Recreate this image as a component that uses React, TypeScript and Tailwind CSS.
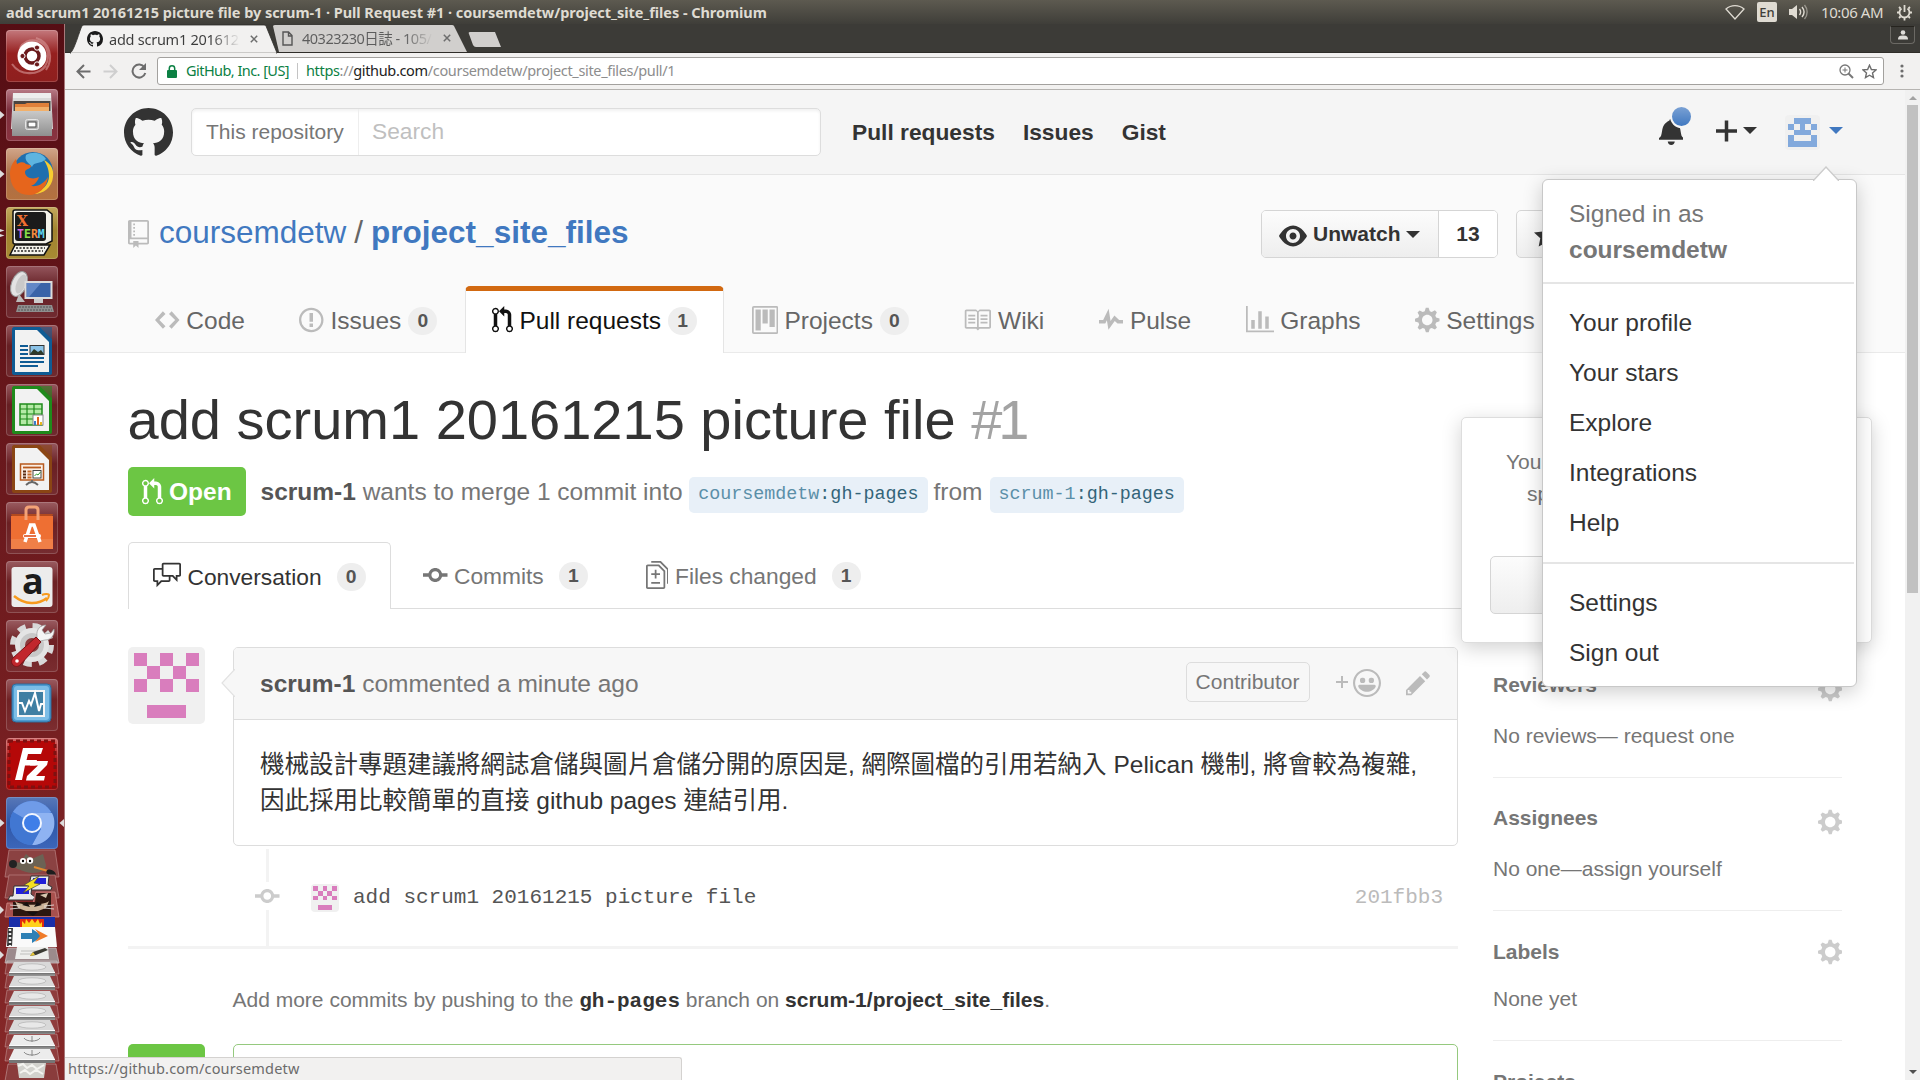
import React from "react";

const sans = "font-['Liberation_Sans','Noto_Sans_CJK_TC',sans-serif]";
const mono = "font-['Liberation_Mono',monospace]";
const ui = "font-['Noto_Sans','Noto_Sans_CJK_JP',sans-serif]";

const ICONS = {
  github: { w: 16, d: "M8 0C3.58 0 0 3.58 0 8c0 3.54 2.29 6.53 5.47 7.59.4.07.55-.17.55-.38 0-.19-.01-.82-.01-1.49-2.01.37-2.53-.49-2.69-.94-.09-.23-.48-.94-.82-1.13-.28-.15-.68-.52-.01-.53.63-.01 1.08.58 1.23.82.72 1.21 1.87.87 2.33.66.07-.52.28-.87.51-1.07-1.78-.2-3.64-.89-3.64-3.95 0-.87.31-1.59.82-2.15-.08-.2-.36-1.02.08-2.12 0 0 .67-.21 2.2.82.64-.18 1.32-.27 2-.27.68 0 1.36.09 2 .27 1.53-1.04 2.2-.82 2.2-.82.44 1.1.16 1.92.08 2.12.51.56.82 1.27.82 2.15 0 3.07-1.87 3.75-3.65 3.95.29.25.54.73.54 1.48 0 1.07-.01 1.93-.01 2.2 0 .21.15.46.55.38A8.013 8.013 0 0 0 16 8c0-4.42-3.58-8-8-8z" },
  repo: { w: 12, d: "M4 9H3V8h1v1zm0-3H3v1h1V6zm0-2H3v1h1V4zm0-2H3v1h1V2zm8-1v12c0 .55-.45 1-1 1H6v2l-1.5-1.5L3 16v-2H1c-.55 0-1-.45-1-1V1c0-.55.45-1 1-1h10c.55 0 1 .45 1 1zm-1 10H1v2h2v-1h3v1h5v-2zm0-10H2v9h9V1z" },
  eye: { w: 16, d: "M8.06 2C3 2 0 8 0 8s3 6 8.06 6C13 14 16 8 16 8s-3-6-7.94-6zM8 12c-2.2 0-4-1.78-4-4 0-2.2 1.8-4 4-4 2.22 0 4 1.8 4 4 0 2.22-1.78 4-4 4zm2-4c0 1.11-.89 2-2 2-1.11 0-2-.89-2-2 0-1.11.89-2 2-2 1.11 0 2 .89 2 2z" },
  star: { w: 14, d: "M14 6l-4.9-.64L7 1 4.9 5.36 0 6l3.6 3.26L2.67 14 7 11.67 11.33 14l-.93-4.74z" },
  code: { w: 14, d: "M9.5 3L8 4.5 11.5 8 8 11.5 9.5 13 14 8 9.5 3zm-5 0L0 8l4.5 5L6 11.5 2.5 8 6 4.5 4.5 3z" },
  issue: { w: 14, d: "M7 2.3c3.14 0 5.7 2.56 5.7 5.7s-2.56 5.7-5.7 5.7A5.71 5.71 0 0 1 1.3 8c0-3.14 2.56-5.7 5.7-5.7zM7 1C3.14 1 0 4.14 0 8s3.14 7 7 7 7-3.14 7-7-3.14-7-7-7zm1 3H6v5h2V4zm0 6H6v2h2v-2z" },
  pull: { w: 12, d: "M11 11.28V5c-.03-.78-.34-1.47-.94-2.06C9.46 2.35 8.78 2.03 8 2H7V0L4 3l3 3V4h1c.27.02.48.11.69.31.21.2.3.42.31.69v6.28A1.993 1.993 0 0 0 10 15a1.993 1.993 0 0 0 1-3.72zm-1 2.92c-.66 0-1.2-.55-1.2-1.2 0-.65.55-1.2 1.2-1.2.65 0 1.2.55 1.2 1.2 0 .65-.55 1.2-1.2 1.2zM4 3c0-1.11-.89-2-2-2a1.993 1.993 0 0 0-1 3.72v6.56A1.993 1.993 0 0 0 2 15a1.993 1.993 0 0 0 1-3.72V4.72c.59-.34 1-.98 1-1.72zm-.8 10c0 .66-.55 1.2-1.2 1.2-.65 0-1.2-.55-1.2-1.2 0-.65.55-1.2 1.2-1.2.65 0 1.2.55 1.2 1.2zM2 4.2C1.34 4.2.8 3.65.8 3c0-.65.55-1.2 1.2-1.2.65 0 1.2.55 1.2 1.2 0 .65-.55 1.2-1.2 1.2z" },
  project: { w: 15, d: "M10 12h3V2h-3v10zm-4-2h3V2H6v8zm-4 4h3V2H2v12zm-1 1h13V1H1v14zM14 0H1a1 1 0 0 0-1 1v14a1 1 0 0 0 1 1h13a1 1 0 0 0 1-1V1a1 1 0 0 0-1-1z" },
  book: { w: 16, d: "M3 5h4v1H3V5zm0 3h4V7H3v1zm0 2h4V9H3v1zm11-5h-4v1h4V5zm0 2h-4v1h4V7zm0 2h-4v1h4V9zm2-6v9c0 .55-.45 1-1 1H9.5l-1 1-1-1H2c-.55 0-1-.45-1-1V3c0-.55.45-1 1-1h5.5l1 1 1-1H15c.55 0 1 .45 1 1zm-8 .5L7.5 3H2v9h6V3.5zm7-.5H9.5l-.5.5V12h6V3z" },
  pulse: { w: 14, d: "M11.5 8L8.8 5.4 6.6 8.5 5.5 1.6 2.38 8H0v2h3.6l.9-1.8.9 5.4L9 8.5l1.6 1.5H14V8z" },
  graph: { w: 16, d: "M16 14v1H0V0h1v14h15zM5 13H3V8h2v5zm4 0H7V3h2v10zm4 0h-2V6h2v7z" },
  gear: { w: 14, d: "M14 8.77v-1.6l-1.94-.64-.45-1.09.88-1.84-1.13-1.13-1.81.91-1.09-.45-.69-1.92h-1.6l-.63 1.94-1.11.45-1.84-.88-1.13 1.13.91 1.81-.45 1.09L0 7.23v1.59l1.94.64.45 1.09-.88 1.84 1.13 1.13 1.81-.91 1.09.45.69 1.92h1.59l.63-1.94 1.11-.45 1.84.88 1.13-1.13-.92-1.81.47-1.09L14 8.75v.02zM7 11c-1.66 0-3-1.34-3-3s1.34-3 3-3 3 1.34 3 3-1.34 3-3 3z" },
  discussion: { w: 16, d: "M15 1H6c-.55 0-1 .45-1 1v2H1c-.55 0-1 .45-1 1v6c0 .55.45 1 1 1h1v3l3-3h4c.55 0 1-.45 1-1V9h1l3 3V9h1c.55 0 1-.45 1-1V2c0-.55-.45-1-1-1zM9 11H4.5L3 12.5V11H1V5h4v3c0 .55.45 1 1 1h3v2zm6-3h-2v1.5L11.5 8H6V2h9v6z" },
  commit: { w: 14, d: "M10.86 7c-.45-1.72-2-3-3.86-3-1.86 0-3.41 1.28-3.86 3H0v2h3.14c.45 1.72 2 3 3.86 3 1.86 0 3.41-1.28 3.86-3H14V7h-3.14zM7 10.2c-1.22 0-2.2-.98-2.2-2.2 0-1.22.98-2.2 2.2-2.2 1.22 0 2.2.98 2.2 2.2 0 1.22-.98 2.2-2.2 2.2z" },
  diff: { w: 13, d: "M6 7h2v1H6v2H5V8H3V7h2V5h1v2zm-3 6h5v-1H3v1zM7.5 2L11 5.5V15c0 .55-.45 1-1 1H1c-.55 0-1-.45-1-1V3c0-.55.45-1 1-1h6.5zM10 6L7 3H1v12h9V6zM8.5 0H3v1h5l4 4v8h1V4.5L8.5 0z" },
  bell: { w: 14, d: "M14 12v1H0v-1l.73-.58c.77-.77.81-2.55 1.19-4.42C2.69 3.23 6 2 6 2c0-.55.45-1 1-1s1 .45 1 1c0 0 3.39 1.23 4.16 5 .38 1.88.42 3.66 1.19 4.42l.66.58H14zm-7 4c1.11 0 2-.89 2-2H5c0 1.11.89 2 2 2z" },
  plus: { w: 12, d: "M12 9H7v5H5V9H0V7h5V2h2v5h5z" },
  smiley: { w: 16, d: "M8 0C3.58 0 0 3.58 0 8s3.58 8 8 8 8-3.58 8-8-3.58-8-8-8zm4.81 12.81a6.72 6.72 0 0 1-2.17 1.45c-.83.36-1.72.53-2.64.53-.92 0-1.81-.17-2.64-.53-.81-.34-1.55-.83-2.17-1.45a6.773 6.773 0 0 1-1.45-2.17A6.59 6.59 0 0 1 1.21 8c0-.92.17-1.81.53-2.64.34-.81.83-1.55 1.45-2.17.62-.62 1.36-1.11 2.17-1.45A6.59 6.59 0 0 1 8 1.21c.92 0 1.81.17 2.64.53.81.34 1.55.83 2.17 1.45.62.62 1.11 1.36 1.45 2.17.36.83.53 1.72.53 2.64 0 .92-.17 1.81-.53 2.64-.34.81-.83 1.55-1.45 2.17zM4 6.8v-.59c0-.66.53-1.19 1.2-1.19h.59c.66 0 1.19.53 1.19 1.19v.59c0 .67-.53 1.2-1.19 1.2H5.2C4.53 8 4 7.47 4 6.8zm5 0v-.59c0-.66.53-1.19 1.2-1.19h.59c.66 0 1.19.53 1.19 1.19v.59c0 .67-.53 1.2-1.19 1.2h-.59C9.53 8 9 7.47 9 6.8zm4 3.2c-.72 1.88-2.91 3-5 3s-4.28-1.13-5-3c-.14-.39.23-1 .66-1h8.59c.41 0 .89.61.75 1z" },
  pencil: { w: 14, d: "M0 12v3h3l8-8-3-3-8 8zm3 2H1v-2h1v1h1v1zm10.3-9.3L12 6 9 3l1.3-1.3a.996.996 0 0 1 1.41 0l1.59 1.59c.39.39.39 1.02 0 1.41z" },
};

function Octicon({ name, size = 28, className = "" }: { name: keyof typeof ICONS; size?: number; className?: string }) {
  const { w, d } = ICONS[name];
  return (
    <svg className={`shrink-0 fill-current ${className}`} viewBox={`0 0 ${w} 16`} width={(w * size) / 16} height={size}>
      <path fillRule="evenodd" d={d} />
    </svg>
  );
}

function Identicon({ rows, color, className }: { rows: string[]; color: string; className: string }) {
  return (
    <svg viewBox="0 0 420 420" className={`shrink-0 ${className}`} shapeRendering="crispEdges">
      <rect width="420" height="420" fill="#f0f0f0" />
      {rows.flatMap((r, y) =>
        r.split("").map((c, x) =>
          c === "x" ? <rect key={`${x}${y}`} x={35 + x * 70} y={35 + y * 70} width="70" height="70" fill={color} /> : null
        )
      )}
    </svg>
  );
}

const PINK = ["x.x.x", ".x.x.", "x.x.x", ".....", ".xxx."];
const BLUE = [".xxx.", "x.x.x", ".xxx.", "x...x", "xxxxx"];

function Caret({ className = "" }: { className?: string }) {
  return <span className={`h-0 w-0 shrink-0 border-x-[7px] border-t-[7px] border-x-transparent ${className}`} />;
}

function Counter({ children }: { children: React.ReactNode }) {
  return (
    <span className="flex h-[28px] min-w-[29px] items-center justify-center rounded-full bg-[#eee] text-[19.25px] leading-[28px] font-bold text-[#555]">
      {children}
    </span>
  );
}

/* ---------- desktop launcher ---------- */

const LAUNCHER: { bg: string; mark?: string; art: React.ReactNode }[] = [
  {
    bg: "bg-[linear-gradient(#c4797d,#96201f_45%,#8e1f1e)]",
    art: (
      <g fill="none">
        <path d="M14 18C20 6 40 8 42 24c1 12-8 20-20 19M6 34c8 12 26 12 34 2M30 8c14 4 18 20 10 32" stroke="#d99a9a" strokeOpacity=".6" strokeWidth="2" />
        <circle cx="26" cy="26" r="14.500" fill="#fff" />
        <circle cx="26" cy="26" r="7" stroke="#6b1a1c" strokeWidth="3.500" />
        <g fill="#6b1a1c" stroke="#fff" strokeWidth="1">
          <circle cx="16.500" cy="26" r="2.600" />
          <circle cx="31" cy="17.600" r="2.600" />
          <circle cx="31" cy="34.400" r="2.600" />
        </g>
      </g>
    ),
  },
  {
    bg: "bg-[linear-gradient(#b87a86,#7d2f3d_40%,#8a3340)]",
    mark: "one",
    art: (
      <g>
        <defs>
          <linearGradient id="cabinet" x1="0" y1="0" x2="0" y2="1">
            <stop offset="0" stopColor="#c9c9c9" />
            <stop offset="1" stopColor="#8f8f8f" />
          </linearGradient>
        </defs>
        <path d="M7 4h38l2 36H5z" fill="#d9d9d9" />
        <path d="M7 4h38v5H7z" fill="#ededed" />
        <rect x="7.500" y="12" width="37" height="11" fill="#4a4440" />
        <path d="M9 15h10l2-1h22v8H9z" fill="#e0803a" />
        <path d="M9 18h34v4H9z" fill="#f2b06a" />
        <path d="M6 22h40v25H6z" fill="url(#cabinet)" />
        <rect x="19.500" y="30.500" width="13" height="10" rx="2" fill="#b5b5b5" stroke="#e6e6e6" />
        <rect x="22" y="33" width="8" height="5" fill="#fff" stroke="#444" />
      </g>
    ),
  },
  {
    bg: "bg-[linear-gradient(#d1a68a,#ad6f47_50%,#b4713f)]",
    mark: "one",
    art: (
      <g>
        <circle cx="27" cy="24" r="20" fill="#1f6fae" />
        <path d="M20 7c6-4 16-3 20 4-6 6-12 2-14 8-3-4-8-6-6-12z" fill="#5db4e0" />
        <path d="M38 12c7 4 10 9 9 17-1 11-11 18-21 17 11-3 17-10 17-18 0-8-3-12-5-16z" fill="#f8cd30" />
        <path d="M4 26c0-7 3-12 6-15l1 5c3-2 6-2 8-1 0 2 6 1 6 3 0 3-6 3-6 6 0 6 8 8 14 5-2 7-8 9-8 9 8 1 13-3 17-9-1 11-10 18-19 18C11 47 4 38 4 26z" fill="#e6651c" />
      </g>
    ),
  },
  {
    bg: "bg-[linear-gradient(#c4a95e,#a1832f_45%,#a88a33)]",
    mark: "two",
    art: (
      <g>
        <path d="M9 3h32l5 4v27l-6 3H9c-2 0-2-1-2-2V5c0-2 1-2 2-2z" fill="#f4f2ea" stroke="#111" strokeWidth="1.500" />
        <rect x="9" y="5" width="31" height="29" rx="3" fill="#1b1b1b" />
        <path d="M9 38h35l-6 10H4z" fill="#f4f2ea" stroke="#111" strokeWidth="1.500" />
        <path d="M10 41h29M8 44h29" stroke="#222" strokeDasharray="2 1.500" strokeWidth="1.500" />
        <text x="11" y="19" fontSize="14" fontWeight="bold" fill="#f07030" fontFamily="DejaVu Serif">X</text>
        <text x="11" y="30.500" fontSize="11.500" fontWeight="bold" fontFamily="DejaVu Sans Mono">
          <tspan fill="#d96ad9">T</tspan><tspan fill="#8ae04a">E</tspan><tspan fill="#f08a40">R</tspan><tspan fill="#5fd7f0">M</tspan>
        </text>
      </g>
    ),
  },
  {
    bg: "bg-[linear-gradient(#94565d,#662126_40%,#702a30)]",
    art: (
      <g>
        <ellipse cx="13" cy="18" rx="7.500" ry="13" transform="rotate(22 13 18)" fill="#e3e3e3" stroke="#9a9a9a" />
        <ellipse cx="15" cy="18" rx="4.500" ry="10" transform="rotate(22 15 18)" fill="#c9c9c9" />
        <path d="M13 28l6 8h-9z" fill="#bbb" />
        <rect x="18.500" y="15" width="28" height="18" fill="#dcdcdc" />
        <rect x="20.500" y="17" width="24" height="14" fill="#3a63a8" />
        <path d="M21 17h14l-12 14h-2z" fill="#6287c6" />
        <rect x="28" y="33" width="9" height="4" fill="#ccc" />
        <path d="M12 39h34l2 7H10z" fill="#8f8f8f" />
        <path d="M13 41h32M12 44h34" stroke="#555" strokeDasharray="2 1" />
      </g>
    ),
  },
  { bg: "bg-[linear-gradient(#96585e,#661f23_40%,#702a2f)]", art: <OfficeDoc color="#0f5b94" kind="writer" /> },
  { bg: "bg-[linear-gradient(#96585e,#661f23_40%,#702a2f)]", art: <OfficeDoc color="#1f8a1b" kind="calc" /> },
  { bg: "bg-[linear-gradient(#96585e,#691f23_40%,#752c30)]", art: <OfficeDoc color="#8a4514" kind="impress" /> },
  {
    bg: "bg-[linear-gradient(#9a5c61,#6b2023_40%,#762c30)]",
    art: (
      <g>
        <path d="M5 12h42l-2 5H7z" fill="#b34a1e" />
        <path d="M5 14h42v33H5z" fill="#ee6f33" />
        <path d="M5 37h42v10H5z" fill="#f07f47" />
        <path d="M20 18V8c0-2 1-3 3-3h6c2 0 3 1 3 3v10" fill="none" stroke="#f4a277" strokeWidth="3" />
        <path d="M19 40l5.500-17h3.500L34 40" fill="none" stroke="#fff" strokeWidth="3.500" />
        <rect x="17" y="32" width="18" height="4" rx="2" fill="#fff" />
        <rect x="18" y="33.200" width="12" height="1.600" fill="#e0501c" />
      </g>
    ),
  },
  {
    bg: "bg-[linear-gradient(#9a5c61,#6c2023_40%,#772c2f)]",
    art: (
      <g>
        <rect x="5.500" y="6" width="41" height="40" rx="3" fill="#ececec" />
        <text x="16" y="33" fontSize="36" fontWeight="bold" fill="#1c1c1c" fontFamily="Open Sans">a</text>
        <path d="M8 35c11 9 24 9 33 2" fill="none" stroke="#f79a1e" strokeWidth="2.500" />
        <path d="M36 34c3-1.500 7-1 7 0s-1 4-3 6" fill="none" stroke="#f79a1e" strokeWidth="2" />
      </g>
    ),
  },
  {
    bg: "bg-[linear-gradient(#9a5c61,#6e2124_40%,#7a2d30)]",
    art: (
      <g>
        <circle cx="26" cy="25" r="19" fill="none" stroke="#d8d8d8" strokeWidth="6" strokeDasharray="8 6.920" />
        <circle cx="26" cy="25" r="17" fill="#e4e4e4" />
        <circle cx="26" cy="25" r="12" fill="#c8c8c8" />
        <circle cx="26" cy="25" r="7" fill="#8a3a3c" />
        <path d="M31 16c-1-6 3-11 9-11l-4 5 3 4 6-1 3-4c1 6-3 11-9 11l-5 1-3-3z" fill="#f4f4f4" stroke="#999" strokeWidth=".7" />
        <path d="M30 17l5 5-21 23c-2 2-5 2-7 0s-2-5 0-7z" fill="#c1272d" stroke="#7c1216" />
        <circle cx="11" cy="41" r="1.800" fill="#fff" />
      </g>
    ),
  },
  {
    bg: "bg-[linear-gradient(#9a5c61,#702124_40%,#7c2d30)]",
    art: (
      <g>
        <rect x="6" y="5" width="39" height="38" rx="4" fill="#4d9bd0" stroke="#2f6c9c" />
        <rect x="8" y="7" width="35" height="34" rx="3" fill="#7cbde6" />
        <rect x="12" y="12" width="26" height="25" fill="#3f7fa3" stroke="#f5f5f5" strokeWidth="2" />
        <path d="M13 24h3l3 8 4-10 2 4 4-12 4 18 2-7h2" fill="none" stroke="#fff" strokeWidth="2" />
      </g>
    ),
  },
  {
    bg: "bg-[linear-gradient(#d06a6a,#b00d0d_45%,#a40606)]",
    art: (
      <g>
        <rect x="3" y="3" width="46" height="46" fill="#b50808" stroke="#7e1111" strokeWidth="3" strokeDasharray="4 3" />
        <path d="M17 10h20l-2 6H22l-1.500 6H31l-1.500 5.500H19L16 42h-7z" fill="#fff" />
        <path d="M25 23h17l-1 4-11 11h9l-1 4.500H20l1-4.500 11-10.500h-8z" fill="#fff" />
      </g>
    ),
  },
  {
    bg: "bg-[linear-gradient(#5878b8,#2f57a8_50%,#3c66ba)]",
    mark: "both",
    art: (
      <g>
        <circle cx="26" cy="26" r="22" fill="#4a80dc" />
        <path d="M26 26L7 15A22 22 0 0 1 45 15z" fill="#6f9be8" />
        <path d="M26 16h20a22 22 0 0 1-20 32l9-17z" fill="#8fb3f2" />
        <path d="M26 26L7 15a22 22 0 0 0 19 33l9-16z" fill="#4177d2" />
        <circle cx="26" cy="26" r="10" fill="#f2f6fe" />
        <circle cx="26" cy="26" r="8" fill="#3f7ee8" />
      </g>
    ),
  },
];

function OfficeDoc({ color, kind }: { color: string; kind: "writer" | "calc" | "impress" }) {
  return (
    <g>
      <path d="M8 2h26l12 12v34c0 1-1 2-2 2H8c-1 0-2-1-2-2V4c0-1 1-2 2-2z" fill={color} />
      <path d="M34 2h12v12z" fill={color} opacity=".55" />
      <path d="M9 5h22l12 12v30H9z" fill="#f2f2f2" />
      {kind === "writer" && (
        <g>
          <path d="M14 21h8M14 25h8M14 29h8M14 33h24M14 37h24M14 41h18" stroke="#0f5b94" strokeWidth="2" />
          <rect x="24" y="20.500" width="14" height="9" fill="#8cc3e8" stroke="#333" />
          <path d="M24 29l4-5 4 3 3-2 3 4z" fill="#2d3a2a" />
        </g>
      )}
      {kind === "calc" && (
        <g>
          <rect x="14" y="20" width="22" height="21" fill="#b5eaa6" stroke="#1f8a1b" strokeWidth="1.500" />
          <path d="M14 25h22M14 30h22M14 35h22M21 20v21M28 20v21" stroke="#1f8a1b" strokeWidth="1.200" />
          <rect x="27" y="31" width="10" height="10" fill="#fff" stroke="#888" />
          <path d="M29 41v-4" stroke="#3a7bc8" strokeWidth="2" />
          <path d="M32 41v-8" stroke="#e0641c" strokeWidth="2" />
          <path d="M35 41v-3" stroke="#e8b820" strokeWidth="2" />
        </g>
      )}
      {kind === "impress" && (
        <g>
          <rect x="14.500" y="21" width="23" height="16" fill="#fbeee4" stroke="#b85a1e" strokeWidth="1.500" />
          <path d="M17 24.500h18" stroke="#b85a1e" strokeWidth="1.800" />
          <path d="M17 28.500h3M17 31.500h3M17 34.500h3" stroke="#5a2a10" strokeWidth="2" />
          <path d="M21.500 28.500h4M21.500 31.500h4M21.500 34.500h4" stroke="#c96a28" strokeWidth="2" />
          <rect x="27" y="27.500" width="8" height="7.500" fill="#fff" stroke="#444" />
          <path d="M28.500 33l2-2 1.500 1 2.500-3" stroke="#2a9a2a" fill="none" />
          <path d="M26 37v2M20 42c4-4 8-4 12 0" stroke="#666" strokeWidth="1.800" fill="none" />
        </g>
      )}
    </g>
  );
}

function Drive({ y, usb = false }: { y: number; usb?: boolean }) {
  return (
    <g transform={`translate(0 ${y})`}>
      <path d="M7-6h50l2 13H5z" fill="#fff" fillOpacity=".1" stroke="#fff" strokeOpacity=".35" strokeWidth=".8" />
      <path d="M14-5h36l5 10.500H9z" fill={usb ? "#ececec" : "#d9d9d9"} />
      {usb ? (
        <path d="M32-4v6M24-2c2 4 14 4 16 0" stroke="#888" fill="none" />
      ) : (
        <ellipse cx="32" cy="0" rx="14" ry="3.200" fill="#e8e8e8" stroke="#aaa" strokeWidth=".6" />
      )}
      <path d="M9 5.500h46v3.500H9z" fill="#767676" />
      <path d="M9 5h46v1H9z" fill="#fafafa" />
    </g>
  );
}

function FoldedIcons() {
  return (
    <svg width="64" height="231" viewBox="0 849 64 231" className="block">
      <path d="M9 850h46l4 27H5z" fill="#8b4242" stroke="#b57a7a" strokeWidth=".8" />
      <path d="M10 860c8 6 20 0 33-6l3 11c0 8-12 9-20 7-8-3-14-4-16-12z" fill="#6b6254" />
      <path d="M22 860l4-6 5 4z" fill="#6b6254" />
      <circle cx="13" cy="864" r="4" fill="#222" />
      <circle cx="23" cy="861" r="3" fill="#fff" />
      <circle cx="30" cy="860.500" r="3.200" fill="#fff" />
      <circle cx="23" cy="861" r="1.200" />
      <circle cx="30" cy="861" r="1.200" />
      <path d="M34 867l14 4" stroke="#e08a30" strokeWidth="2" />
      <ellipse cx="51" cy="873" rx="5" ry="3" transform="rotate(25 51 873)" fill="#1d1d1d" />
      <path d="M9 875h46l4 23H5z" fill="#8b4242" stroke="#b57a7a" strokeWidth=".8" />
      <path d="M31 876h18l-1 9 4 2-1 3H28z" fill="#e8e8e8" stroke="#333" />
      <rect x="33" y="878" width="13" height="6" fill="#2020d8" />
      <path d="M14 886h18l-1 8 4 3-2 3H8l2-4h3z" fill="#e8e8e8" stroke="#333" />
      <rect x="16" y="888" width="13" height="6" fill="#2020d8" />
      <path d="M39 876l-15 9 5 1-6 7 17-9-6-1z" fill="#f5e020" stroke="#444" strokeWidth=".7" />
      <path d="M36 892h19l4 25H5l2-14h26z" fill="#a8504d" stroke="#d08a88" strokeWidth=".8" />
      <path d="M36 893h15v23H13v-14h22z" fill="#2c1710" />
      <path d="M15 901c5 5 28 5 34 0l-3 7-8 3h-12l-8-3z" fill="#cdb59a" />
      <path d="M40 895l8-2-2 5z" fill="#d8c8b0" />
      <path d="M22 905l8 2-3-5zM42 905l-8 2 3-5zM27 912h11l-5 4z" fill="#151010" />
      <path d="M10 905l10 1M10 909l10-1M54 905l-10 1M54 909l-10-1" stroke="#eee" strokeWidth=".8" />
      <rect x="9" y="917" width="46" height="11" fill="#1a2ea8" />
      <path d="M20 928v-9h24v9z" fill="#e2290f" />
      <path d="M22 928v-7l3 3 1-5 3 4 3-4 3 4 3-4 2 5 2-2v6z" fill="#ffd11a" />
      <path d="M8 927h47l2 20H6z" fill="#fafafa" />
      <path d="M8 928h5l-1 18H7z" fill="#333" />
      <path d="M10 929v17" stroke="#eee" strokeDasharray="2 2" strokeWidth="2.500" />
      <path d="M21 933h11v-4l11 7-11 7v-4H21z" fill="#2e80b5" />
      <path d="M35 929l13 7-13 6 5-6z" fill="#ef7a28" />
      <path d="M8 948h48l3 15H5z" fill="#9c8a8c" stroke="#c8b8ba" strokeWidth=".8" />
      <path d="M17 947h31l1 12H15z" fill="#eeeeec" />
      <path d="M21 951h20M20 954h14" stroke="#aaa" strokeWidth=".7" />
      <path d="M30 956l3-4 12-4 3 2-12 5z" fill="#3b3a33" />
      <path d="M30 956l3-4 2 3z" fill="#e8c838" />
      <Drive y={967} />
      <Drive y={981} />
      <Drive y={996} />
      <Drive y={1011} />
      <Drive y={1025} />
      <Drive y={1040} usb />
      <Drive y={1054} usb />
      <path d="M8 1064h48l3 17H5z" fill="#8a3c3c" stroke="#fff" strokeOpacity=".4" strokeWidth=".8" />
      <path d="M17 1063h29l-2 15H19z" fill="#d2d2cd" />
      <path d="M18 1066l5-2 4 4 5-3 5 4 7-4M20 1073l5-3 5 4 6-4 7 4" stroke="#f4f4f0" strokeWidth="2" fill="none" />
      <path d="M0 906l4 4-4 4zM0 951l4 4-4 4z" fill="#ddd" />
    </svg>
  );
}

function Launcher() {
  return (
    <div className="flex w-[65px] shrink-0 flex-col border-r border-[#a8787a] bg-[linear-gradient(#560e14,#6b191d_45%,#862828)]">
      <div className="flex flex-col gap-[7px] pt-[6px]">
        {LAUNCHER.map((t, i) => (
          <div key={i} className="flex h-[52px] items-center">
            <svg width="6" height="12" viewBox="0 0 6 12" className="shrink-0">
              {(t.mark === "one" || t.mark === "both") && <path d="M0 2l4.500 4L0 10z" fill="#ddd" />}
              {t.mark === "two" && <path d="M0 2l4.500 1.500L0 5zM0 7l4.500 1.500L0 10z" fill="#ddd" />}
            </svg>
            <div className={`h-[52px] w-[52px] rounded-[4px] shadow-[inset_0_0_0_1px_rgba(255,255,255,0.18)] ${t.bg}`}>
              <svg width="52" height="52" viewBox="0 0 52 52" className="overflow-visible">{t.art}</svg>
            </div>
            <svg width="6" height="12" viewBox="0 0 6 12" className="shrink-0">
              {t.mark === "both" && <path d="M6 2L1.500 6 6 10z" fill="#ddd" />}
            </svg>
          </div>
        ))}
      </div>
      <FoldedIcons />
    </div>
  );
}

/* ---------- desktop bar and browser chrome ---------- */

function TopBar() {
  return (
    <div className={`flex h-[24px] shrink-0 items-center justify-between bg-[linear-gradient(#5d5a50,#3f3e39)] pr-[7px] pl-[6px] text-[#dfdbd2] ${ui}`}>
      <span className="text-[14.500px] leading-[24px] font-bold whitespace-nowrap tracking-[-0.05px]">
        add scrum1 20161215 picture file by scrum-1 · Pull Request #1 · coursemdetw/project_site_files - Chromium
      </span>
      <div className="flex items-center">
        <svg width="20" height="16" viewBox="0 0 20 16" fill="none" stroke="#dfdbd2" strokeWidth="1.300">
          <path d="M1 5c5-4.500 13-4.500 18 0l-9 10z" />
        </svg>
        <span className="ml-[12px] flex h-[20px] w-[20px] items-center justify-center rounded-[2px] bg-[#dfdbd2] text-[13px] leading-[20px] font-medium text-[#3f3e39]">En</span>
        <svg className="ml-[12px]" width="19" height="18" viewBox="0 0 19 18" fill="none" stroke="#dfdbd2" strokeWidth="1.400">
          <path d="M0 6h3l5-4v14l-5-4H0z" fill="#dfdbd2" stroke="none" />
          <path d="M10.500 6c1.500 2 1.500 4 0 6M13 4c2.500 3 2.500 7 0 10" />
          <path d="M15.500 2c3.500 4 3.500 10 0 14" opacity=".5" />
        </svg>
        <span className="ml-[13px] w-[61px] text-[15px] leading-[24px] whitespace-nowrap tracking-[-0.4px]">10:06 AM</span>
        <svg className="ml-[14px]" width="17" height="17" viewBox="0 0 17 17" fill="none" stroke="#dfdbd2">
          <path d="M5.500 4.500a5 5 0 1 0 6 0" strokeWidth="1.800" />
          <path d="M8.500 1v7" strokeWidth="1.800" />
          <path d="M1 8.500h2M14 8.500h2M3 3l1.500 1.500M14 3l-1.500 1.500M3 14l1.500-1.500M14 14l-1.500-1.500M8.500 14v2.500" strokeWidth="1.800" />
        </svg>
      </div>
    </div>
  );
}

function TabClose({ className = "" }: { className?: string }) {
  return (
    <svg className={`shrink-0 ${className}`} width="8" height="8" viewBox="0 0 8 8" stroke="#6d6d6d" strokeWidth="1.500">
      <path d="M.8.8l6.400 6.400M7.200.8L.8 7.200" />
    </svg>
  );
}

function TabStrip() {
  return (
    <div className={`flex h-[29px] shrink-0 border-b border-[#2f2d29] bg-[#3c3b37] text-[14.500px] leading-[28px] ${ui}`}>
      <div className="relative z-10 -mb-px ml-[5px] h-[29px] w-[208px]">
        <svg className="absolute inset-0 overflow-visible" width="208" height="29" viewBox="0 0 208 29">
          <path d="M0 29C4 28 10 5 12 2q.6-1 2-1h180q1.500 0 2 1l11 27z" fill="#f2f1f0" stroke="#2f2d29" strokeWidth=".8" />
          <path d="M1 28.500h205V30H1z" fill="#f2f1f0" />
        </svg>
        <div className="relative flex h-[29px] items-center pl-[17px]">
          <Octicon name="github" size={16} className="text-[#1b1b1b]" />
          <span className="ml-[6px] w-[131px] overflow-hidden bg-[linear-gradient(90deg,#3c3c3c_78%,#3c3c3c00)] bg-clip-text whitespace-nowrap tracking-[-0.25px] text-transparent">add scrum1 201612</span>
          <TabClose className="ml-[10px]" />
        </div>
      </div>
      <div className="relative h-[28px] w-[194px]">
        <svg className="absolute inset-0 overflow-visible" width="194" height="28" viewBox="0 0 194 28">
          <path d="M-5 2q.6-1 2-1h177q1.500 0 2 1l13 26H1z" fill="#d1cfcd" />
        </svg>
        <div className="relative flex h-[28px] items-center pl-[4px] text-[#5c5c5c]">
          <svg width="11" height="15" viewBox="0 0 11 15" fill="none" stroke="#555" strokeWidth="1.400">
            <path d="M1 1h5.500L10 4.500V14H1zM6.500 1v4H10" />
          </svg>
          <span className="ml-[9px] w-[131px] overflow-hidden bg-[linear-gradient(90deg,#5c5c5c_78%,#5c5c5c00)] bg-clip-text whitespace-nowrap tracking-[-0.5px] text-transparent">40323230日誌 - 105/</span>
          <TabClose className="ml-[10px]" />
        </div>
      </div>
      <svg className="mt-[8px] -ml-[4px]" width="34" height="16" viewBox="0 0 34 16">
        <path d="M2 0h25l6 15H8Q6 15 5 13L1 2Q0 0 2 0z" fill="#d1cfcd" />
      </svg>
      <div className="mt-[2px] mr-[5px] ml-auto flex h-[18px] w-[25px] items-center justify-center rounded-b-[4px] border border-[#6b6964] border-t-[#26241f]">
        <svg width="10" height="10" viewBox="0 0 10 10" fill="#dedcd8">
          <circle cx="5" cy="2.500" r="2.300" />
          <path d="M0 9.500C0 6 2 5.500 5 5.500s5 .5 5 4z" />
        </svg>
      </div>
    </div>
  );
}

function Toolbar() {
  return (
    <div className={`flex h-[37px] shrink-0 items-center border-b border-[#b6b4b1] bg-[#f2f1f0] text-[14.500px] ${ui}`}>
      <svg className="ml-[11px]" width="15" height="15" viewBox="0 0 15 15" fill="none" stroke="#6d6d6d" strokeWidth="2">
        <path d="M14.500 7.500H2M8 1L1.500 7.500 8 14" />
      </svg>
      <svg className="ml-[12px]" width="15" height="15" viewBox="0 0 15 15" fill="none" stroke="#cfcfcf" strokeWidth="2">
        <path d="M.5 7.500H13M7 1l6.500 6.500L7 14" />
      </svg>
      <svg className="ml-[13px]" width="16" height="16" viewBox="0 0 16 16" fill="none" stroke="#6d6d6d" strokeWidth="2">
        <path d="M13.500 4.500A6.500 6.500 0 1 0 14.300 10" />
        <path d="M15 0v7H8z" fill="#6d6d6d" stroke="none" />
      </svg>
      <div className="ml-[10px] flex h-[28px] w-[1727px] items-center rounded-[3px] border border-[#a3a19e] bg-white pr-[6px] pl-[9px]">
        <svg width="10" height="13" viewBox="0 0 10 13">
          <rect x="0" y="5" width="10" height="8" rx="1" fill="#0b8043" />
          <path d="M2.300 6V3.500a2.700 2.700 0 0 1 5.400 0V6" fill="none" stroke="#0b8043" strokeWidth="1.500" />
        </svg>
        <span className="ml-[9px] w-[103px] whitespace-nowrap tracking-[-0.55px] text-[#0b8043]">GitHub, Inc. [US]</span>
        <span className="ml-[8px] h-[16px] w-px bg-[#c4c4c4]" />
        <span className="ml-[8px] whitespace-nowrap tracking-[-0.34px] text-[#8d8d8d]">
          <span className="text-[#0b8043]">https</span>://<span className="text-[#222]">github.com</span>/coursemdetw/project_site_files/pull/1
        </span>
        <svg className="ml-auto" width="15" height="15" viewBox="0 0 15 15" fill="none" stroke="#777" strokeWidth="1.300">
          <circle cx="6" cy="6" r="5" />
          <path d="M9.500 9.500L14 14" strokeWidth="2" />
          <path d="M6 3.500v5M3.500 6h5" strokeWidth="1" />
        </svg>
        <svg className="ml-[8px]" width="15" height="15" viewBox="0 0 15 15" fill="none" stroke="#6d6d6d" strokeWidth="1.400">
          <path d="M7.500 1.200l1.900 4.300 4.600.4-3.500 3.100 1 4.600-4-2.400-4 2.400 1-4.600L1 5.900l4.600-.4z" />
        </svg>
      </div>
      <svg className="ml-[16px]" width="4" height="14" viewBox="0 0 4 14" fill="#6d6d6d">
        <circle cx="2" cy="2" r="1.600" /><circle cx="2" cy="7" r="1.600" /><circle cx="2" cy="12" r="1.600" />
      </svg>
    </div>
  );
}

/* ---------- repository page ---------- */

function SiteHeader() {
  return (
    <div className="flex h-[85px] shrink-0 items-center border-b border-[#e5e5e5] bg-[#f5f5f5] pr-[62px] pl-[59px]">
      <Octicon name="github" size={49} className="text-[#333]" />
      <div className="ml-[18px] flex h-[48px] w-[630px] items-center rounded-[5px] border border-[#ddd] bg-white shadow-[inset_0_2px_3px_rgba(0,0,0,0.06)]">
        <span className="flex h-full w-[167px] items-center border-r border-[#eee] pl-[14px] text-[21px] text-[#767676]">This repository</span>
        <span className="mb-px pl-[13px] text-[22.750px] text-[#bfbfbf]">Search</span>
      </div>
      <div className="ml-[31px] flex gap-[28px] text-[22.750px] font-bold text-[#333]">
        <span>Pull requests</span>
        <span>Issues</span>
        <span>Gist</span>
      </div>
      <div className="ml-auto flex items-center text-[#333]">
        <div className="relative mb-[2px]">
          <Octicon name="bell" />
          <span className="absolute -top-[12px] left-[11px] h-[23px] w-[23px] rounded-full border-2 border-[#f5f5f5] bg-[linear-gradient(#7aa1d4,#4078c0)]" />
        </div>
        <Octicon name="plus" className="mb-[3px] ml-[33px]" />
        <Caret className="mb-[3px] ml-[6px] border-t-[#333]" />
        <Identicon rows={BLUE} color="#82a9dc" className="ml-[28px] h-[35px] w-[35px] rounded-[4px]" />
        <Caret className="mb-[3px] ml-[9px] border-t-[#4078c0]" />
      </div>
    </div>
  );
}

const REPO_TABS: { icon: keyof typeof ICONS; label: string; count?: number; active?: boolean }[] = [
  { icon: "code", label: "Code" },
  { icon: "issue", label: "Issues", count: 0 },
  { icon: "pull", label: "Pull requests", count: 1, active: true },
  { icon: "project", label: "Projects", count: 0 },
  { icon: "book", label: "Wiki" },
  { icon: "pulse", label: "Pulse" },
  { icon: "graph", label: "Graphs" },
  { icon: "gear", label: "Settings" },
];

function RepoHead() {
  return (
    <div className="flex h-[178px] shrink-0 flex-col border-b border-[#eaeaea] bg-[#fafafa] px-[63px] pt-[35px]">
      <div className="flex h-[48px] shrink-0 items-center">
        <Octicon name="repo" className="mb-px text-[#bbb]" />
        <div className="mb-[5px] ml-[10px] text-[31.500px] leading-[40px] whitespace-nowrap text-[#4078c0]">
          coursemdetw<span className="mx-[8px] text-[#666]">/</span>
          <span className="font-bold">project_site_files</span>
        </div>
        <div className="ml-auto flex h-[48px] w-[581px] gap-[18px] text-[21px] font-bold text-[#333]">
          <div className="flex w-[237px] overflow-hidden rounded-[5px] border border-[#d5d5d5]">
            <div className="flex w-[176px] shrink-0 items-center bg-[linear-gradient(#fcfcfc,#eee)] pl-[17px]">
              <Octicon name="eye" className="mt-[3px]" />
              <span className="ml-[6px]">Unwatch</span>
              <Caret className="ml-[5px] border-t-[#333]" />
            </div>
            <div className="flex flex-1 items-center justify-center border-l border-[#d5d5d5] bg-white">13</div>
          </div>
          <div className="flex flex-1 items-center rounded-[5px] border border-[#d5d5d5] bg-[linear-gradient(#fcfcfc,#eee)] pl-[17px]">
            <Octicon name="star" className="mt-[4px]" />
          </div>
        </div>
      </div>
      <div className="mt-[28px] flex h-[67px] shrink-0">
        {REPO_TABS.map((t) => (
          <div
            key={t.label}
            className={`flex shrink-0 items-center border-x px-[26.250px] text-[24.500px] whitespace-nowrap ${
              t.active
                ? "rounded-t-[5px] border-t-[5px] border-x-[#e5e5e5] border-t-[#d26911] bg-white pb-[3px] text-[#111]"
                : "border-transparent pt-[2px] text-[#666]"
            }`}
          >
            <Octicon name={t.icon} className={`mb-px ${t.active ? "text-[#111]" : "text-[#bbb]"}`} />
            <span className="mt-px ml-[6.600px]">{t.label}</span>
            {t.count !== undefined && (
              <span className="mt-px ml-[7px]"><Counter>{t.count}</Counter></span>
            )}
          </div>
        ))}
      </div>
    </div>
  );
}

function Branch({ user, name, className }: { user: string; name: string; className: string }) {
  return (
    <span className={`mt-[7px] flex h-[36px] items-center rounded-[5px] bg-[#e8f0f8] px-[9px] text-[18.375px] text-[#336479] ${mono} ${className}`}>
      <span className="text-[#5b8fa8]">{user}</span>:{name}
    </span>
  );
}

const PR_TABS: { icon: keyof typeof ICONS; label: string; count: number; active?: boolean }[] = [
  { icon: "discussion", label: "Conversation", count: 0, active: true },
  { icon: "commit", label: "Commits", count: 1 },
  { icon: "diff", label: "Files changed", count: 1 },
];

function SideSection({ title, body, className, gap, gear }: { title: string; body: string; className: string; gap: string; gear: string }) {
  return (
    <div className={`flex shrink-0 flex-col border-b border-[#eee] ${className}`}>
      <div className="flex h-[24px] items-start justify-between leading-[24px] font-bold">
        <span>{title}</span>
        <Octicon name="gear" className={`text-[#ccc] ${gear}`} />
      </div>
      <span className={`h-[24px] leading-[24px] ${gap}`}>{body}</span>
    </div>
  );
}

function PullRequest() {
  return (
    <div className="flex flex-1 flex-col px-[63px] pt-[33px]">
      <h1 className="-ml-[0.500px] h-[68px] text-[56px] leading-[68px] whitespace-nowrap text-[#333]">
        add scrum1 20161215 picture file <span className="tracking-[-4px] text-[#a3a3a3]">#1</span>
      </h1>
      <div className="mt-[13px] flex h-[49px] shrink-0 items-center text-[24.500px] whitespace-nowrap text-[#767676]">
        <span className="flex h-[49px] w-[118px] items-center rounded-[5px] bg-[#6cc644] pl-[14px] font-bold text-white">
          <Octicon name="pull" />
          <span className="mt-px ml-[6px]">Open</span>
        </span>
        <span className="mt-[2px] ml-[14.500px]">
          <b className="text-[#555]">scrum-1</b> wants to merge 1 commit into
        </span>
        <Branch user="coursemdetw" name="gh-pages" className="ml-[6.500px]" />
        <span className="mt-[2px] ml-[6px]">from</span>
        <Branch user="scrum-1" name="gh-pages" className="ml-[7px]" />
      </div>
      <div className="mt-[26px] flex h-[67px] shrink-0 text-[22.750px] whitespace-nowrap">
        {PR_TABS.map((t) => (
          <div
            key={t.label}
            className={`flex items-center ${
              t.active
                ? "w-[263px] rounded-t-[5px] border border-b-0 border-[#ddd] pl-[24px] text-[#333]"
                : "border-b border-[#ddd] pt-px pr-[26px] pl-[32px] text-[#767676]"
            }`}
          >
            <Octicon name={t.icon} className="mb-[2px]" />
            <span className="mt-[2px] mr-[15px] ml-[6.500px]">{t.label}</span>
            <span className="mt-px"><Counter>{t.count}</Counter></span>
          </div>
        ))}
        <div className="flex-1 border-b border-[#ddd]" />
      </div>
      <div className="mt-[38px] flex">
        <div className="flex w-[1330px] shrink-0 flex-col">
          <div className="flex h-[199px]">
            <Identicon rows={PINK} color="#d97dbd" className="h-[77px] w-[77px] rounded-[5px]" />
            <div className="relative ml-[28px] flex w-[1225px] flex-col rounded-[5px] border border-[#ddd]">
              <svg className="absolute top-[21px] -left-[13px]" width="14" height="28" viewBox="0 0 14 28">
                <path d="M14 0L1 14l13 14" fill="#f7f7f7" stroke="#e2e2e2" strokeWidth="1.200" />
              </svg>
              <div className="flex h-[72px] shrink-0 items-center rounded-t-[4px] border-b border-[#ddd] bg-[#f7f7f7] pr-[27px] pl-[26px] text-[24.500px] text-[#767676]">
                <span className="mt-[2px]"><b className="text-[#555]">scrum-1</b> commented a minute ago</span>
                <span className="mb-[3px] ml-auto flex h-[40px] items-center rounded-[5px] border border-[#ddd] px-[9px] text-[21px]">Contributor</span>
                <Octicon name="plus" size={16} className="mb-[3px] ml-[26px] text-[#bbb]" />
                <Octicon name="smiley" className="mb-px ml-[5px] text-[#bbb]" />
                <Octicon name="pencil" className="mb-px ml-[25px] text-[#bbb]" />
              </div>
              <p className="px-[26px] pt-[27px] text-[24.500px] leading-[36px] text-[#333]">
                機械設計專題建議將網誌倉儲與圖片倉儲分開的原因是, 網際圖檔的引用若納入 Pelican 機制, 將會較為複雜,
                <br />
                因此採用比較簡單的直接 github pages 連結引用.
              </p>
            </div>
          </div>
          <div className="flex h-[103px] border-b-[3px] border-[#f3f3f3]">
            <div className="ml-[127px] flex w-[25px] flex-col items-center pt-[3px]">
              <span className="h-[33px] w-[3px] bg-[#f3f3f3]" />
              <Octicon name="commit" className="text-[#ccc]" />
              <span className="w-[3px] flex-1 bg-[#f3f3f3]" />
            </div>
            <div className={`mt-[38px] ml-[31px] flex h-[28px] flex-1 items-center pr-[15px] text-[21px] text-[#555] ${mono}`}>
              <Identicon rows={PINK} color="#d97dbd" className="h-[28px] w-[28px] rounded-[4px]" />
              <span className="ml-[14px]">add scrum1 20161215 picture file</span>
              <span className="ml-auto text-[#bbb]">201fbb3</span>
            </div>
          </div>
          <p className="mt-[35px] h-[32px] pl-[104.500px] text-[21px] leading-[32px] text-[#767676]">
            Add more commits by pushing to the <b className={`text-[#333] ${mono}`}>gh-pages</b> branch on{" "}
            <b className="text-[#333]">scrum-1/project_site_files</b>.
          </p>
          <div className="mt-[28px] flex h-[80px]">
            <div className="w-[77px] rounded-[5px] bg-[#6cc644]" />
            <div className="ml-[28px] flex-1 rounded-[5px] border border-[#95c97e]" />
          </div>
        </div>
        <div className="ml-[35px] flex w-[351px] flex-col pt-[26px] text-[21px] text-[#767676]">
          <SideSection title="Reviewers" body="No reviews— request one" className="h-[105px]" gap="mt-[27px]" gear="mt-[2px]" />
          <SideSection title="Assignees" body="No one—assign yourself" className="h-[133px] pt-[28px]" gap="mt-[27px]" gear="mt-[2px]" />
          <SideSection title="Labels" body="None yet" className="h-[130px] pt-[29px]" gap="mt-[23px]" gear="-mt-[2px]" />
          <span className="mt-[29px] leading-[24px] font-bold">Projects</span>
        </div>
      </div>
    </div>
  );
}

function NoticeCard() {
  return (
    <div className="absolute top-[327px] left-[1396px] flex h-[226px] w-[411px] flex-col rounded-[5px] border border-[#ddd] bg-white px-[28px] pt-[28px] text-[21px] leading-[31.500px] text-[#767676] shadow-[0_5px_20px_rgba(0,0,0,0.18)]">
      <span className="pl-[16px]">You</span>
      <span className="pl-[37px]">sp</span>
      <span className="mt-[47px] h-[58px] shrink-0 rounded-[5px] border border-[#d5d5d5] bg-[linear-gradient(#fcfcfc,#eee)]" />
    </div>
  );
}

function AccountMenu() {
  return (
    <div className="absolute top-[89px] left-[1477px] flex h-[508px] w-[315px] flex-col rounded-[6px] border border-[#c8c8c8] bg-white text-[24.500px] text-[#333] shadow-[0_5px_20px_rgba(0,0,0,0.2)]">
      <svg className="absolute -top-[14px] right-[17px]" width="26" height="15" viewBox="0 0 26 15">
        <path d="M0 15L13 1l13 14" fill="#fff" stroke="#ccc" strokeWidth="1.400" />
      </svg>
      <div className="mr-[2px] flex h-[104px] shrink-0 flex-col border-b-2 border-[#e5e5e5] pt-[16px] pl-[26px] leading-[36px] text-[#767676]">
        <span>Signed in as</span>
        <b>coursemdetw</b>
      </div>
      <div className="mr-[2px] flex h-[280px] shrink-0 flex-col border-b-2 border-[#e5e5e5] pt-[14px] pl-[26px] leading-[50px]">
        <span>Your profile</span>
        <span>Your stars</span>
        <span>Explore</span>
        <span>Integrations</span>
        <span>Help</span>
      </div>
      <div className="flex flex-col pt-[14px] pl-[26px] leading-[50px]">
        <span>Settings</span>
        <span>Sign out</span>
      </div>
    </div>
  );
}

function Scrollbar() {
  return (
    <div className="flex w-[15px] shrink-0 flex-col items-center bg-[#f1f1f1]">
      <span className="mt-[6px] h-0 w-0 border-x-4 border-b-4 border-x-transparent border-b-[#a3a3a3]" />
      <span className="mt-[5px] h-[488px] w-[11px] bg-[#c1c1c1]" />
      <span className="mt-auto mb-[6px] h-0 w-0 border-x-4 border-t-4 border-x-transparent border-t-[#505050]" />
    </div>
  );
}

export default function App() {
  return (
    <div className={`flex h-[1080px] w-[1920px] flex-col overflow-hidden bg-white ${sans}`}>
      <TopBar />
      <div className="flex h-[1056px]">
        <Launcher />
        <div className="flex w-[1855px] flex-col">
          <TabStrip />
          <Toolbar />
          <div className="flex h-[990px]">
            <div className="relative flex w-[1840px] flex-col overflow-hidden">
              <SiteHeader />
              <RepoHead />
              <PullRequest />
              <NoticeCard />
              <AccountMenu />
              <div className={`absolute bottom-0 left-0 h-[23px] w-[617px] rounded-tr-[3px] border border-b-0 border-l-0 border-[#d4d2d0] bg-[#f2f1f0] pl-[3px] text-[14.500px] leading-[21px] tracking-[0.17px] text-[#6b6b6b] ${ui}`}>
                https://github.com/coursemdetw
              </div>
            </div>
            <Scrollbar />
          </div>
        </div>
      </div>
    </div>
  );
}
